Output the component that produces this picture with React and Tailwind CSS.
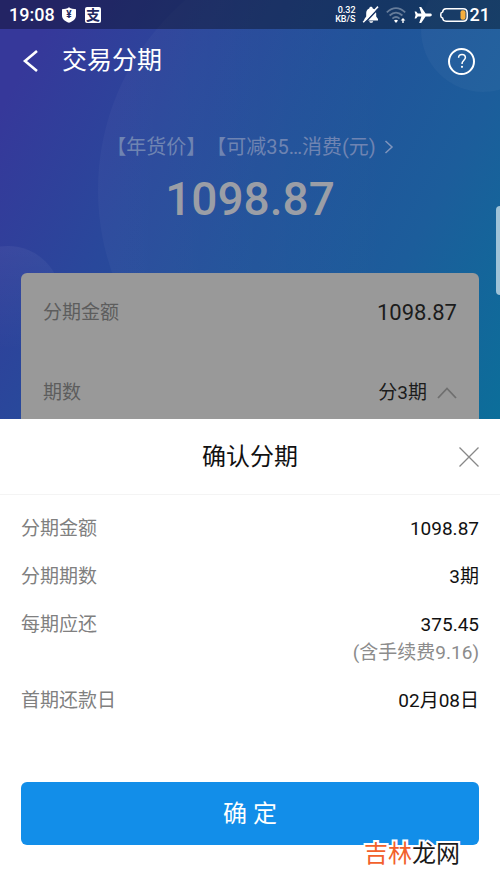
const details = [
  { label: "分期金额", value: "1098.87" },
  { label: "分期期数", value: "3期" },
  { label: "每期应还", value: "375.45", note: "(含手续费9.16)" },
  { label: "首期还款日", value: "02月08日" },
];

function StatusBar() {
  return (
    <div className="relative flex h-[29px] items-center justify-between bg-black/35 pl-[9px] pr-[10px] text-white">
      <div className="flex items-center">
        <span className="w-[46px] text-lg leading-6 font-medium">19:08</span>
        <span className="relative ml-[6px] flex h-4 w-4 items-center justify-center">
          <svg viewBox="0 0 16 16" className="absolute inset-0 h-4 w-4" fill="white">
            <path d="M8 0.3 C10 1.8 12.5 2.2 15 2.2 V8.5 C15 12 12 14.5 8 15.8 C4 14.5 1 12 1 8.5 V2.2 C3.5 2.2 6 1.8 8 0.3 Z" />
          </svg>
          <span className="relative text-[10px] leading-4 font-bold text-[#22295f]">
            ¥
          </span>
        </span>
        <span className="ml-2 flex h-4 w-4 items-center justify-center rounded-xs bg-white text-sm leading-4 font-bold text-[#22295f]">
          支
        </span>
      </div>

      <div className="flex items-center">
        <div className="text-right text-[9px] leading-[9px] font-medium">
          <div>0.32</div>
          <div>KB/S</div>
        </div>
        {/* muted bell */}
        <svg viewBox="0 0 18 18" className="ml-[6px] h-[18px] w-[18px]" fill="white">
          <path d="M9 0.8 C10 0.8 10.6 1.4 10.8 2.4 C13.2 3.2 14.2 5 14.2 7.4 V10.6 L16 13 V14.4 H2.4 V13 L4.2 10.6 V7.4 C4.2 5 5 3.2 7.2 2.4 C7.4 1.4 8 0.8 9 0.8 Z" />
          <path d="M7.2 15.2 H11.2 C10.8 17.4 7.6 17.4 7.2 15.2 Z" />
          <path d="M17.5 1.3 L2.8 17" stroke="#1c3768" strokeWidth="1.6" />
          <path d="M16 0.6 L1.2 16.2" stroke="white" strokeWidth="1.6" />
        </svg>
        <svg viewBox="0 0 20 18" className="ml-[6px] h-[18px] w-5" fill="none">
          <g stroke="white" strokeOpacity="0.35" strokeWidth="1.8">
            <path d="M0.8 6.3 Q10 -2.1 19.2 6.3" />
            <path d="M3.6 9.5 Q10 3.7 16.4 9.5" />
            <path d="M6.4 12.6 Q10 9.5 13.6 12.6" />
          </g>
          <path d="M8 14.5 Q10 12.9 12 14.5 L10 17 Z" fill="white" />
          <path d="M17 12 L19.4 14.5 H17.7 V17 H16.3 V14.5 H14.6 Z" fill="white" />
        </svg>
        {/* airplane mode */}
        <svg viewBox="0 0 18 18" className="ml-2 h-[18px] w-[18px]" fill="white">
          <path d="M17.8 9 C17.8 8.1 17 7.6 16 7.6 H11.6 L7.2 1 H5.2 L7.4 7.6 H3.8 L2.2 5.6 H0.6 L1.6 9 L0.6 12.4 H2.2 L3.8 10.4 H7.4 L5.2 17 H7.2 L11.6 10.4 H16 C17 10.4 17.8 9.9 17.8 9 Z" />
        </svg>
        <svg viewBox="0 0 28 14" className="ml-2 h-[14px] w-7" fill="none">
          <path
            d="M6 0.8 H23 Q27.2 0.8 27.2 5 V9 Q27.2 13.2 23 13.2 H6 Q3 13.2 2.6 10 Q0.8 9.6 0.8 8 V6 Q0.8 4.4 2.6 4 Q3 0.8 6 0.8 Z"
            stroke="white"
            strokeWidth="1.5"
          />
          <rect x="20.5" y="2.3" width="5" height="9.4" rx="2" fill="#f5ae3d" />
        </svg>
        <span className="ml-[2px] text-lg leading-6 font-medium">21</span>
      </div>
    </div>
  );
}

function NavBar() {
  return (
    <header className="relative flex h-16 items-center pl-[22px] pr-[25px] text-white">
      <button type="button" aria-label="返回" className="h-6 w-5">
        <svg viewBox="0 0 20 24" className="h-6 w-5" fill="none">
          <path d="M15 2 L3 12 L15 22" stroke="white" strokeWidth="2.6" />
        </svg>
      </button>
      <h1 className="ml-5 text-[25px] leading-8">交易分期</h1>
      <button
        type="button"
        aria-label="帮助"
        className="ml-auto flex h-[27px] w-[27px] items-center justify-center rounded-full border-2 border-white"
      >
        <svg viewBox="0 0 12 16" className="h-4 w-3" fill="none">
          <path
            d="M2.6 4.8 C2.6 2.7 3.9 1.4 6 1.4 C8.1 1.4 9.4 2.7 9.4 4.6 C9.4 7.2 6 7.6 6 11"
            stroke="white"
            strokeWidth="1.5"
          />
          <circle cx="6" cy="13.8" r="1.1" fill="white" />
        </svg>
      </button>
    </header>
  );
}

function InstallmentCard() {
  return (
    <section className="mx-[21px] mt-12 rounded-md bg-[#999999] px-[22px] text-[#1c1c1c]">
      <div className="flex h-20 items-center justify-between">
        <span className="text-[19px] leading-7 text-[#5d5d5d]">分期金额</span>
        <span className="text-[22px] leading-7">1098.87</span>
      </div>
      <div className="flex h-20 items-center justify-between">
        <span className="text-[19px] leading-7 text-[#5d5d5d]">期数</span>
        <button type="button" className="flex items-center gap-[10px] text-[19px] leading-7">
          分3期
          <svg viewBox="0 0 20 12" className="h-3 w-5" fill="none">
            <path d="M1 11 L10 1.5 L19 11" stroke="#6f6f6f" strokeWidth="1.8" />
          </svg>
        </button>
      </div>
    </section>
  );
}

function ConfirmSheet() {
  return (
    <section
      role="dialog"
      aria-labelledby="sheet-title"
      className="absolute inset-x-0 bottom-0 bg-white pb-[43px]"
    >
      <div className="relative flex h-[76px] items-center justify-center border-b border-[#f4f4f4]">
        <h2 id="sheet-title" className="text-2xl text-[#111111]">
          确认分期
        </h2>
        <button type="button" aria-label="关闭" className="absolute right-[21px] h-5 w-5">
          <svg viewBox="0 0 20 20" className="h-5 w-5" fill="none">
            <path d="M0.5 0.5 L19.5 19.5 M19.5 0.5 L0.5 19.5" stroke="#888888" strokeWidth="1.3" />
          </svg>
        </button>
      </div>

      <dl className="flex flex-col gap-5 px-[21px] pt-5 text-[19px] leading-7">
        {details.map((item) => (
          <div key={item.label} className="flex justify-between">
            <dt className="text-[#808080]">{item.label}</dt>
            <dd className="text-right text-[#111111]">
              {item.value}
              {item.note && <div className="text-[#8c8c8c]">{item.note}</div>}
            </dd>
          </div>
        ))}
      </dl>

      <div className="mt-[67px] px-[21px]">
        <button
          type="button"
          className="h-[63px] w-full rounded-md bg-[#128ee9] text-2xl text-white"
        >
          确 定
        </button>
      </div>

      <div className="absolute right-10 bottom-[18px] text-2xl leading-8 text-[#1a1a1a] [-webkit-text-stroke:4px_white] [paint-order:stroke]">
        <span className="text-[#f2612c]">吉林</span>龙网
      </div>
    </section>
  );
}

export default function App() {
  return (
    <div
      lang="zh-CN"
      className="relative min-h-screen overflow-hidden bg-[#128ee9] font-['Roboto','Noto_Sans_CJK_SC',sans-serif]"
    >
      <div className="absolute inset-x-0 top-0 h-[440px] overflow-hidden bg-[linear-gradient(118deg,#36389a_8%,#29489b_32%,#22529a_50%,#1c5d9b_74%,#0c6e9a_98%)]">
        <div className="absolute top-[-60px] left-[98px] h-[500px] w-[500px] rounded-full bg-linear-to-r from-white/3 to-transparent to-60%" />
        <div className="absolute top-[246px] left-[-45px] h-[106px] w-[106px] rounded-full bg-linear-to-b from-white/5 to-transparent" />
        <div className="absolute top-[-32px] right-[-45px] h-[124px] w-[124px] rounded-full bg-white/3" />
      </div>

      <StatusBar />
      <NavBar />

      <main className="relative">
        <div className="flex flex-col items-center pt-10">
          <a href="#bill" className="flex items-center text-xl leading-7 text-[#6f84b2] [text-spacing-trim:space-all]">
            【年货价】【可减35…消费(元)
            <svg viewBox="0 0 10 14" className="ml-2 h-[14px] w-[10px]" fill="none">
              <path d="M1.5 1 L8 7 L1.5 13" stroke="#8095bd" strokeWidth="1.5" />
            </svg>
          </a>
          <div className="mt-3 text-[46px] leading-[52px] font-medium text-[#9b9ea6]">
            1098.87
          </div>
        </div>
        <InstallmentCard />
      </main>

      <div className="absolute top-[206px] right-0 h-[89px] w-1 rounded-l-sm bg-[#9fc3d8]" />

      <ConfirmSheet />
    </div>
  );
}
